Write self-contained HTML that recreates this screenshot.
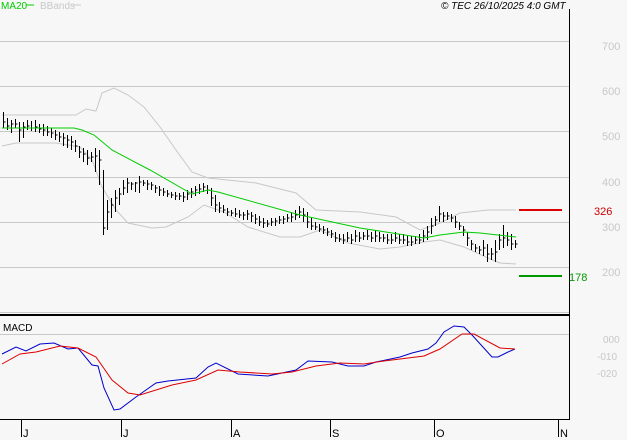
<!DOCTYPE html>
<html><head><meta charset="utf-8"><style>
html,body{margin:0;padding:0;background:#f7f7f7;width:627px;height:440px;overflow:hidden}
svg{display:block;font-family:"Liberation Sans",sans-serif}
</style></head><body>
<svg width="627" height="440" viewBox="0 0 627 440" xmlns="http://www.w3.org/2000/svg">
<rect width="627" height="440" fill="#f7f7f7"/>
<g stroke="#c8c8c8" stroke-width="1">
<line x1="0" y1="41.5" x2="569" y2="41.5"/><line x1="0" y1="86.5" x2="569" y2="86.5"/>
<line x1="0" y1="131.5" x2="569" y2="131.5"/><line x1="0" y1="177.5" x2="569" y2="177.5"/>
<line x1="0" y1="222.5" x2="569" y2="222.5"/><line x1="0" y1="267.5" x2="569" y2="267.5"/>
<line x1="0" y1="312.5" x2="569" y2="312.5"/><line x1="0" y1="334.5" x2="569" y2="334.5"/>
</g>
<line x1="0" y1="315" x2="569" y2="315" stroke="#000" stroke-width="2"/>
<line x1="0" y1="419.5" x2="569" y2="419.5" stroke="#000"/>
<line x1="569.5" y1="9" x2="569.5" y2="420" stroke="#000"/>
<g fill="#c8c8c8" font-size="11">
<text x="602" y="50">700</text><text x="602" y="95">600</text><text x="602" y="140">500</text>
<text x="602" y="186">400</text><text x="602" y="231">300</text><text x="602" y="276">200</text>
<text x="603" y="343" font-size="10">000</text><text x="597" y="360" font-size="10">-010</text><text x="597" y="377" font-size="10">-020</text>
</g>
<line x1="519" y1="210" x2="562" y2="210" stroke="#d00" stroke-width="2"/>
<text x="594" y="215" fill="#c00" font-size="11">326</text>
<line x1="519" y1="276" x2="562" y2="276" stroke="#090" stroke-width="2"/>
<text x="569" y="281" fill="#090" font-size="11">178</text>
<text x="1" y="9" fill="#0c0" font-size="10">MA20</text><line x1="26" y1="5" x2="34" y2="5" stroke="#0c0"/>
<text x="40" y="9" fill="#c8c8c8" font-size="10">BBands</text><line x1="73" y1="5" x2="81" y2="5" stroke="#c8c8c8"/>
<text x="441" y="9" fill="#000" font-size="10" font-style="italic">© TEC 26/10/2025 4:0 GMT</text>
<text x="3" y="331" fill="#000" font-size="10">MACD</text>
<g stroke="#000"><line x1="21.5" y1="419" x2="21.5" y2="437"/><line x1="121.5" y1="419" x2="121.5" y2="437"/><line x1="231.5" y1="419" x2="231.5" y2="437"/><line x1="330.5" y1="419" x2="330.5" y2="437"/><line x1="434.5" y1="419" x2="434.5" y2="437"/><line x1="558.5" y1="419" x2="558.5" y2="437"/></g>
<g font-size="11" fill="#000"><text x="23" y="437">J</text><text x="123" y="437">J</text><text x="233" y="437">A</text><text x="332" y="437">S</text><text x="436" y="437">O</text><text x="560" y="437">N</text></g>
<polyline fill="none" stroke="#c8c8c8" points="2,115 76,115 86,109 96,111 102,93 114,88 128,95 144,107 160,127 176,150 192,172 208,178 256,183 296,193 316,210 360,212 396,217 420,230 440,223 460,213 488,210 516,210"/>
<polyline fill="none" stroke="#c8c8c8" points="2,146 16,143 56,143 80,147 92,160 102,187 116,210 128,223 152,228 166,227 188,217 204,205 224,212 248,227 280,237 300,237 320,230 348,243 380,249 400,247 424,242 440,240 464,247 488,258 500,263 516,264"/>
<path fill="none" stroke="#000" stroke-width="1" d="M3.5 112V128M3.5 122h2M7.5 118V130M7.5 126h2M11.5 120V133M11.5 124h2M15.5 119V128M15.5 124h2M19.5 122V142M19.5 130h2M23.5 122V138M23.5 127h2M27.5 120V130M27.5 126h2M31.5 121V131M31.5 128h2M35.5 120V132M35.5 127h2M39.5 124V133M39.5 129h2M43.5 124V136M43.5 130h2M47.5 126V136M47.5 132h2M51.5 128V138M51.5 133h2M55.5 130V140M55.5 135h2M59.5 132V142M59.5 137h2M63.5 133V146M63.5 138h2M67.5 135V148M67.5 140h2M71.5 136V150M71.5 142h2M75.5 140V152M75.5 146h2M79.5 146V158M79.5 152h2M83.5 148V162M83.5 154h2M87.5 150V165M87.5 158h2M91.5 152V162M91.5 157h2M95.5 148V172M95.5 156h2M99.5 150V185M99.5 160h2M103.5 170V235M103.5 228h2M107.5 200V230M107.5 212h2M111.5 198V218M111.5 205h2M115.5 190V212M115.5 198h2M119.5 188V205M119.5 194h2M123.5 180V195M123.5 188h2M127.5 178V193M127.5 183h2M131.5 182V190M131.5 184h2M135.5 182V192M135.5 183h2M139.5 176V193M139.5 182h2M143.5 180V186M143.5 183h2M147.5 180V190M147.5 184h2M151.5 182V190M151.5 185h2M155.5 185V193M155.5 188h2M159.5 186V196M159.5 190h2M163.5 188V196M163.5 192h2M167.5 190V197M167.5 194h2M171.5 192V198M171.5 195h2M175.5 192V200M175.5 196h2M179.5 193V200M179.5 196h2M183.5 192V202M183.5 197h2M187.5 190V200M187.5 194h2M191.5 188V198M191.5 192h2M195.5 186V196M195.5 190h2M199.5 184V194M199.5 189h2M203.5 183V192M203.5 187h2M207.5 185V194M207.5 190h2M211.5 188V206M211.5 198h2M215.5 195V212M215.5 205h2M219.5 202V213M219.5 208h2M223.5 205V213M223.5 210h2M227.5 208V216M227.5 212h2M231.5 210V216M231.5 213h2M235.5 208V217M235.5 214h2M239.5 210V218M239.5 215h2M243.5 212V220M243.5 215h2M247.5 210V220M247.5 214h2M251.5 212V222M251.5 216h2M255.5 214V224M255.5 219h2M259.5 216V226M259.5 222h2M263.5 218V228M263.5 223h2M267.5 220V227M267.5 224h2M271.5 218V226M271.5 222h2M275.5 218V226M275.5 221h2M279.5 216V224M279.5 220h2M283.5 216V224M283.5 219h2M287.5 214V222M287.5 218h2M291.5 212V222M291.5 217h2M295.5 210V220M295.5 215h2M299.5 206V218M299.5 212h2M303.5 208V222M303.5 215h2M307.5 212V228M307.5 222h2M311.5 218V230M311.5 226h2M315.5 222V230M315.5 227h2M319.5 224V232M319.5 229h2M323.5 226V234M323.5 230h2M327.5 228V236M327.5 232h2M331.5 230V238M331.5 234h2M335.5 232V242M335.5 238h2M339.5 234V242M339.5 239h2M343.5 234V244M343.5 240h2M347.5 232V242M347.5 238h2M351.5 234V244M351.5 240h2M355.5 230V242M355.5 236h2M359.5 232V242M359.5 238h2M363.5 232V240M363.5 236h2M367.5 230V240M367.5 236h2M371.5 232V242M371.5 238h2M375.5 230V242M375.5 236h2M379.5 232V242M379.5 238h2M383.5 234V242M383.5 238h2M387.5 234V244M387.5 240h2M391.5 234V244M391.5 240h2M395.5 232V242M395.5 238h2M399.5 234V244M399.5 240h2M403.5 234V244M403.5 240h2M407.5 236V246M407.5 242h2M411.5 236V246M411.5 242h2M415.5 236V244M415.5 240h2M419.5 234V244M419.5 240h2M423.5 230V242M423.5 236h2M427.5 226V240M427.5 232h2M431.5 218V234M431.5 226h2M435.5 216V226M435.5 220h2M439.5 206V222M439.5 214h2M443.5 212V222M443.5 216h2M447.5 212V220M447.5 216h2M451.5 214V222M451.5 218h2M455.5 216V228M455.5 222h2M459.5 222V230M459.5 226h2M463.5 226V236M463.5 230h2M467.5 232V246M467.5 238h2M471.5 240V250M471.5 244h2M475.5 244V252M475.5 248h2M479.5 246V254M479.5 250h2M483.5 240V256M483.5 248h2M487.5 244V262M487.5 254h2M491.5 248V260M491.5 254h2M495.5 240V262M495.5 252h2M499.5 234V250M499.5 240h2M503.5 225V248M503.5 238h2M507.5 232V246M507.5 240h2M511.5 234V250M511.5 244h2M515.5 240V248M515.5 244h2"/>
<polyline fill="none" stroke="#0c0" points="2,128 74,128 82,130 94,135 112,150 150,170 192,194 208,190 218,192 300,215 360,228 424,238 440,235 464,232 480,233 516,237"/>
<polyline fill="none" stroke="#00c" points="2,354 16,347 26,351 40,344 54,343 68,349 78,348 92,365 98,366 104,388 114,410 120,409 136,397 156,383 168,381 196,378 208,367 216,363 238,374 268,376 296,370 308,361 332,362 348,366 364,366 376,362 400,357 412,353 428,349 436,343 444,332 454,326 464,327 472,335 492,357 498,357 508,352 515,349"/>
<polyline fill="none" stroke="#d00" points="2,364 20,354 36,352 60,346 78,348 96,357 112,380 128,393 140,395 172,385 196,380 218,370 240,372 272,374 292,372 316,366 340,363 364,364 384,361 424,356 440,349 462,334 474,334 500,348 515,349"/>
</svg>
</body></html>
